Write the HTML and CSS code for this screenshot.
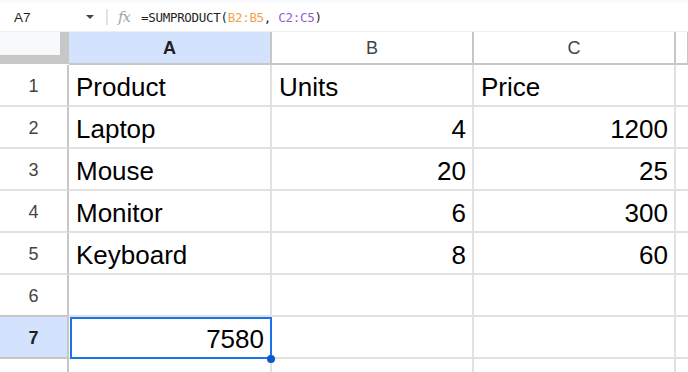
FILE: index.html
```html
<!DOCTYPE html>
<html>
<head>
    <meta charset="UTF-8">
    <title>Sheet</title>
    <link rel="stylesheet" href="styles.css">
</head>
<body>
    <div class="formula-bar">
        <div class="name-box">
            <span class="cell-ref">A7</span>
            <span class="caret"></span>
        </div>
        <div class="divider"></div>
        <span class="fx">fx</span>
        <div class="formula">=SUMPRODUCT(<span class="ref-b">B2:B5</span>, <span class="ref-c">C2:C5</span>)</div>
    </div>

    <div class="grid">
        <div class="corner"></div>
        <div class="col-head active">A</div>
        <div class="col-head">B</div>
        <div class="col-head">C</div>
        <div class="col-head last"></div>

        <div class="row-head">1</div>
        <div class="cell">Product</div>
        <div class="cell">Units</div>
        <div class="cell">Price</div>
        <div class="cell last"></div>

        <div class="row-head">2</div>
        <div class="cell">Laptop</div>
        <div class="cell num">4</div>
        <div class="cell num">1200</div>
        <div class="cell last"></div>

        <div class="row-head">3</div>
        <div class="cell">Mouse</div>
        <div class="cell num">20</div>
        <div class="cell num">25</div>
        <div class="cell last"></div>

        <div class="row-head">4</div>
        <div class="cell">Monitor</div>
        <div class="cell num">6</div>
        <div class="cell num">300</div>
        <div class="cell last"></div>

        <div class="row-head">5</div>
        <div class="cell">Keyboard</div>
        <div class="cell num">8</div>
        <div class="cell num">60</div>
        <div class="cell last"></div>

        <div class="row-head">6</div>
        <div class="cell"></div>
        <div class="cell"></div>
        <div class="cell"></div>
        <div class="cell last"></div>

        <div class="row-head active">7</div>
        <div class="cell num selected">7580</div>
        <div class="cell"></div>
        <div class="cell"></div>
        <div class="cell last"></div>

        <div class="row-head">8</div>
        <div class="cell"></div>
        <div class="cell"></div>
        <div class="cell"></div>
        <div class="cell last"></div>
    </div>
</body>
</html>
```

FILE: styles.css
```css
body {
    margin: 0;
    font-family: 'Liberation Sans', Arial, sans-serif;
    background-color: white;
    color: #000;
    overflow: hidden;
}

.formula-bar {
    display: flex;
    align-items: center;
    height: 28px;
    border-top: 3px solid #f8fafd;
    border-bottom: 1px solid #eeeeee;
    background-color: white;
}

.name-box {
    display: flex;
    align-items: center;
    width: 106px;
    padding-left: 14px;
    box-sizing: border-box;
}

.cell-ref {
    font-size: 13.5px;
    color: #1f1f1f;
    flex: 1;
}

.caret {
    width: 0;
    height: 0;
    border-left: 4px solid transparent;
    border-right: 4px solid transparent;
    border-top: 4px solid #444;
    margin-right: 12px;
}

.divider {
    width: 2px;
    height: 16px;
    background-color: #e3e3e3;
}

.fx {
    font-family: 'DejaVu Serif', serif;
    font-style: italic;
    font-size: 15px;
    color: #a3a3a3;
    margin-left: 10px;
    width: 23px;
    letter-spacing: -1px;
}

.formula {
    font-family: 'DejaVu Sans Mono', monospace;
    font-size: 12.5px;
    letter-spacing: -0.3px;
    color: #1f1f1f;
}

.ref-b {
    color: #f2a14e;
}

.ref-c {
    color: #8e5fd2;
}

.grid {
    display: grid;
    grid-template-columns: 69px 203px 202px 202px 1fr;
    grid-template-rows: 33px repeat(8, 42px);
}

.corner {
    background-color: #f8f9fa;
    border-right: 9px solid #c7c7c7;
    border-bottom: 9px solid #c7c7c7;
    margin-bottom: 1px;
}

.col-head {
    display: flex;
    align-items: center;
    justify-content: center;
    font-size: 18px;
    color: #444;
    border-right: 2px solid #c7c7c7;
    border-bottom: 2px solid #c7c7c7;
    padding-top: 1px;
    box-sizing: border-box;
}

.col-head.active {
    background-color: #d3e3fd;
    color: #1f1f1f;
    font-weight: bold;
}

.row-head {
    display: flex;
    align-items: center;
    justify-content: center;
    font-size: 18px;
    color: #444;
    border-right: 2px solid #c7c7c7;
    border-bottom: 2px solid #e1e1e1;
    padding-top: 3px;
    box-sizing: border-box;
}

.row-head.active {
    background-color: #d3e3fd;
    color: #1f1f1f;
    font-weight: bold;
    border-top: 2px solid #c7c7c7;
    border-bottom-color: #c7c7c7;
    margin-top: -2px;
    height: 44px;
}

.cell {
    display: flex;
    align-items: center;
    font-size: 26px;
    line-height: 36px;
    padding: 4px 6px 0 7px;
    border-right: 2px solid #e1e1e1;
    border-bottom: 2px solid #e1e1e1;
    box-sizing: border-box;
    white-space: nowrap;
    position: relative;
}

.cell.num {
    justify-content: flex-end;
}

.cell.last {
    border-right: none;
}

.selected::after {
    content: '';
    position: absolute;
    top: 0;
    left: 1px;
    right: -2px;
    bottom: -2px;
    border: 2px solid #1a73e8;
    z-index: 1;
}

.selected::before {
    content: '';
    position: absolute;
    right: -5px;
    bottom: -6px;
    width: 8px;
    height: 8px;
    border-radius: 50%;
    background-color: #0b57d0;
    z-index: 2;
}
```
